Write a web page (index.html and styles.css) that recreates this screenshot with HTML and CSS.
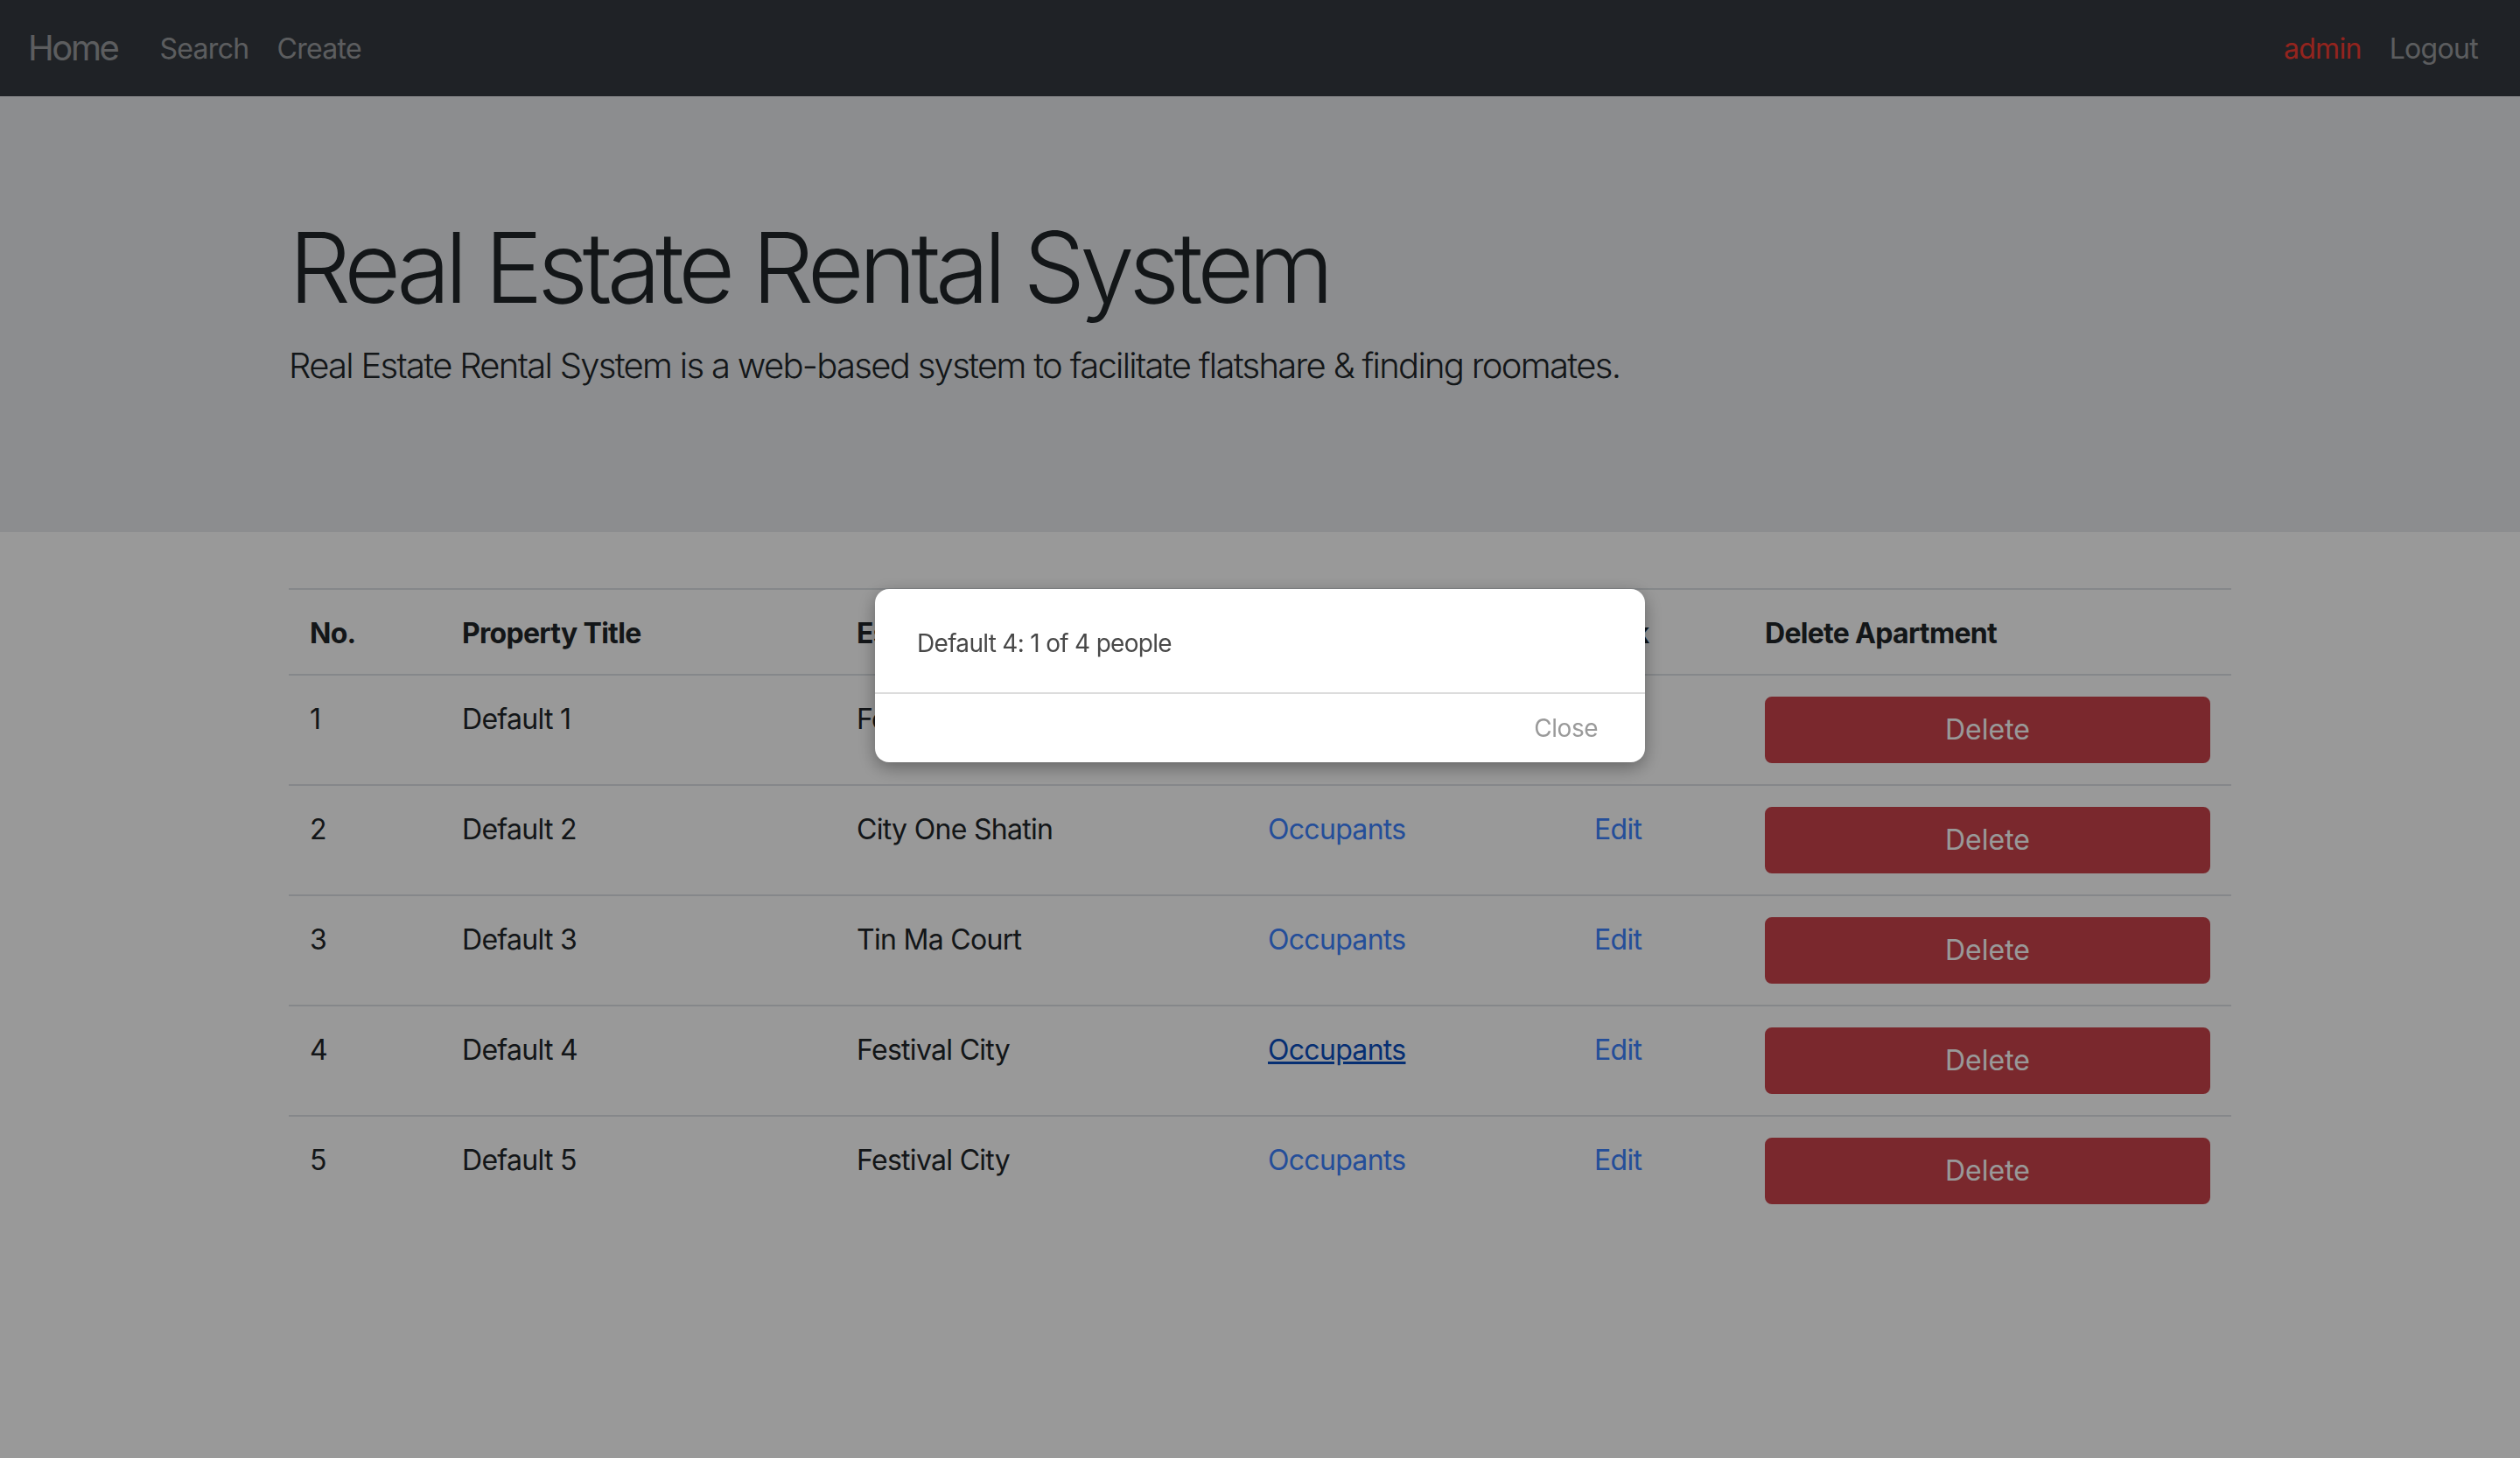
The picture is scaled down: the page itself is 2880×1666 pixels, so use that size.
FILE: index.html
```html
<!DOCTYPE html>
<html lang="en">
<head>
<meta charset="utf-8">
<title>Real Estate Rental System</title>
<link rel="stylesheet" href="styles.css">
</head>
<body>
<nav class="navbar">
  <div class="nav-group">
    <a class="brand" href="#">Home</a>
    <a class="nav-link" href="#">Search</a>
    <a class="nav-link" href="#">Create</a>
  </div>
  <div class="nav-group">
    <a class="nav-link nav-admin" href="#">admin</a>
    <a class="nav-link" href="#">Logout</a>
  </div>
</nav>

<header class="jumbotron">
  <div class="container">
    <h1 class="display">Real Estate Rental System</h1>
    <p class="lead">Real Estate Rental System is a web-based system to facilitate flatshare &amp; finding roomates.</p>
  </div>
</header>

<main class="container">
  <table class="table">
    <colgroup>
      <col class="c-no"><col class="c-title"><col class="c-estate"><col class="c-occ"><col class="c-edit"><col class="c-del">
    </colgroup>
    <thead>
      <tr><th>No.</th><th>Property Title</th><th>Estate</th><th>Occupants</th><th>Link</th><th>Delete Apartment</th></tr>
    </thead>
    <tbody>
      <tr><td>1</td><td>Default 1</td><td>Festival City</td><td><a href="#">Occupants</a></td><td><a href="#">Edit</a></td><td><button class="btn-danger">Delete</button></td></tr>
      <tr><td>2</td><td>Default 2</td><td>City One Shatin</td><td><a href="#">Occupants</a></td><td><a href="#">Edit</a></td><td><button class="btn-danger">Delete</button></td></tr>
      <tr><td>3</td><td>Default 3</td><td>Tin Ma Court</td><td><a href="#">Occupants</a></td><td><a href="#">Edit</a></td><td><button class="btn-danger">Delete</button></td></tr>
      <tr><td>4</td><td>Default 4</td><td>Festival City</td><td><a href="#" class="hover">Occupants</a></td><td><a href="#">Edit</a></td><td><button class="btn-danger">Delete</button></td></tr>
      <tr><td>5</td><td>Default 5</td><td>Festival City</td><td><a href="#">Occupants</a></td><td><a href="#">Edit</a></td><td><button class="btn-danger">Delete</button></td></tr>
    </tbody>
  </table>
</main>

<div class="backdrop"></div>
<div class="modal" role="dialog">
  <div class="modal-body">Default 4: 1 of 4 people</div>
  <div class="modal-footer"><button class="btn-close">Close</button></div>
</div>
</body>
</html>
```
FILE: styles.css
```css
* { box-sizing: border-box; }
html, body { margin: 0; padding: 0; }
body {
  font-family: Inter, "Noto Sans", "Liberation Sans", sans-serif;
  font-size: 32px;
  line-height: 48px;
  letter-spacing: -0.7px;
  color: #212529;
  background: #fff;
  min-height: 1666px;
}
a { text-decoration: none; }

.navbar {
  display: flex;
  justify-content: space-between;
  align-items: center;
  height: 110px;
  padding: 0 32px;
  background: #343a40;
}
.nav-group { display: flex; align-items: center; }
.brand {
  font-size: 40px;
  line-height: 60px;
  letter-spacing: -2.4px;
  margin-right: 32px;
  color: rgba(255,255,255,.5);
}
.nav-link {
  padding: 0 16px;
  color: rgba(255,255,255,.5);
  font-size: 32px;
  line-height: 48px;
  margin-top: 2px;
}
.nav-admin { color: #f53c32; }

.jumbotron {
  background: #e9ecef;
  padding: 128px 0;
  margin-bottom: 64px;
}
.container {
  width: 2280px;
  margin: 0 auto;
  padding: 0 30px;
}
.display {
  margin: 0 0 16px;
  font-size: 112px;
  font-weight: 300;
  line-height: 134px;
  letter-spacing: -6.2px;
}
.lead {
  margin: 0 0 32px;
  font-size: 40px;
  font-weight: 300;
  line-height: 60px;
  letter-spacing: -1.7px;
}

.table {
  width: 100%;
  border-collapse: collapse;
  table-layout: fixed;
}
.c-no { width: 174px; }
.c-title { width: 451px; }
.c-estate { width: 470px; }
.c-occ { width: 373px; }
.c-edit { width: 195px; }
.c-del { width: 557px; }
.table th, .table td {
  padding: 26px 24px 22px;
  text-align: left;
  vertical-align: top;
  border-top: 2px solid #dee2e6;
}
.table td:last-child { padding-top: 24px; padding-bottom: 24px; }
.table th { font-weight: 700; vertical-align: bottom; }
.table a { color: #3c82ff; }
.table a.hover { color: #0a4fc0; text-decoration: underline; }

.btn-danger {
  display: block;
  width: 100%;
  height: 76px;
  padding: 12px 24px;
  font: inherit;
  font-size: 32px;
  line-height: 48px;
  color: #fff;
  background: #cb434b;
  border: 2px solid #cb434b;
  border-radius: 8px;
}

.backdrop {
  position: fixed;
  inset: 0;
  background: rgba(0,0,0,.4);
}
.modal {
  position: fixed;
  top: 673px;
  left: 1000px;
  width: 880px;
  background: #fff;
  border-radius: 16px;
  box-shadow: 0 6px 20px rgba(0,0,0,.35);
  overflow: hidden;
}
.modal-body {
  height: 118px;
  padding: 6px 48px 0;
  display: flex;
  align-items: center;
  font-size: 28px;
  letter-spacing: -0.7px;
  color: #484848;
}
.modal-footer {
  height: 80px;
  border-top: 2px solid #dcdcdc;
  display: flex;
  align-items: center;
  justify-content: flex-end;
  padding: 0 54px 0 0;
}
.btn-close {
  background: none;
  border: 0;
  padding: 0;
  font: inherit;
  font-size: 28px;
  letter-spacing: -0.5px;
  color: #9a9a9a;
}
```
